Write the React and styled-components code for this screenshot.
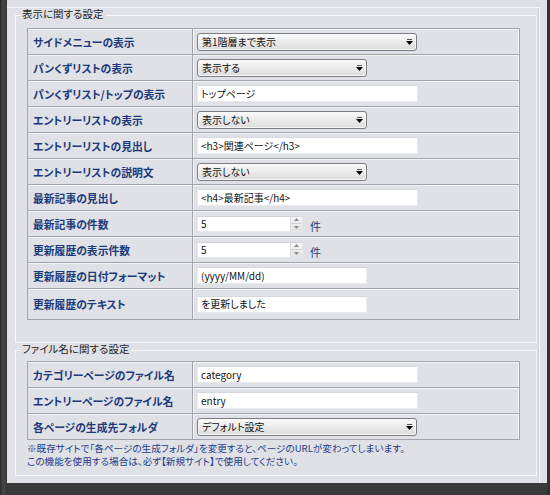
import React from 'react';
import styled, { createGlobalStyle } from 'styled-components';

const Global = createGlobalStyle`
  html, body { margin: 0; padding: 0; background: #363636; }
  body {
    width: 550px; height: 495px; overflow: hidden;
    font-family: "Noto Sans CJK JP", "Noto Sans", sans-serif;
  }
`;

const Screen = styled.div`
  width: 550px;
  height: 495px;
  box-sizing: border-box;
  padding: 0 3px 12px 7px;
  background: linear-gradient(90deg, #2b2b2b 0, #474747 3px, #3a3a3a 7px, #3a3a3a 546px, #2c2c2c 550px);
  display: flex;
`;

const Panel = styled.div`
  flex: 1;
  background: #dfe1e6;
  display: flex;
  flex-direction: column;
`;

const TopStrip = styled.div`
  height: 7px;
  flex: none;
  margin-right: 7px;
  background: #dcdee3;
`;

const Content = styled.div`
  flex: 1;
  margin-right: 7px;
  border-top: 1px solid #f6f7f9;
  border-right: 1px solid #f6f7f9;
  box-shadow: inset -1px 0 0 #d0d3d9;
  padding-left: 8px;
  display: flex;
  flex-direction: column;
`;

const Fieldset = styled.fieldset`
  margin: 0 2px 0 0;
  padding: ${p => p.$pad};
  border: 1px solid #f7f8fa;
  box-shadow: 1px 0 0 #d3d6dc;
  min-width: 0;
`;

const Legend = styled.legend`
  margin-left: -7px;
  padding: 0 2px 2px;
  font-size: 10.5px;
  line-height: 12px;
  color: #1e1e1e;
  font-feature-settings: "palt";
`;

const Table = styled.div`
  width: 493px;
  box-sizing: border-box;
  border: 1px solid #a2a4a9;
  border-bottom: none;
  box-shadow: inset -1px 0 0 #f5f6f8;
`;

const Row = styled.div`
  display: grid;
  grid-template-columns: 165px 1fr;
  height: ${p => (p.$tall ? 31 : 26)}px;
  box-sizing: border-box;
  border-bottom: 1px solid #a2a4a9;
  box-shadow: inset 0 1px 0 #f3f4f6;
`;

const Label = styled.div`
  display: flex;
  align-items: center;
  padding-left: 5px;
  border-right: 1px solid #a2a4a9;
  font-size: 10.8px;
  font-weight: 700;
  color: #1c3a7a;
  font-feature-settings: "palt";
  white-space: nowrap;
`;

const Value = styled.div`
  display: flex;
  align-items: center;
  padding-left: 4px;
  box-shadow: inset 1px 0 0 #f3f4f6;
`;

const SelectBox = styled.div`
  width: ${p => p.$w}px;
  height: 18px;
  box-sizing: border-box;
  border: 1px solid #7c7e83;
  border-radius: 3px;
  background: linear-gradient(#fbfbfb 0%, #ececec 45%, #dcdcdc 100%);
  box-shadow: inset 0 0 0 1px #f7f7f7;
  display: flex;
  align-items: center;
  justify-content: space-between;
  padding: 0 3px 0 4px;
`;

const ControlText = styled.span`
  font-size: 10px;
  line-height: 12px;
  color: #111;
  font-feature-settings: "palt";
  white-space: nowrap;
`;

const TextBox = styled.div`
  width: ${p => p.$w}px;
  height: 17px;
  box-sizing: border-box;
  background: #fff;
  border: 1px solid #e9eaed;
  border-top-color: #d6d8dc;
  display: flex;
  align-items: center;
  padding-left: 3px;
`;

const SpinWrap = styled.div`
  display: flex;
  align-items: center;
`;

const SpinBox = styled.div`
  width: 106px;
  height: 16px;
  box-sizing: border-box;
  background: #fff;
  border: 1px solid #e6e7ea;
  border-top-color: #d2d4d8;
  display: flex;
  align-items: stretch;
  padding-left: 3px;
`;

const SpinText = styled.div`
  flex: 1;
  display: flex;
  align-items: center;
`;

const SpinButtons = styled.div`
  width: 11px;
  display: flex;
  flex-direction: column;
  border-left: 1px solid #d8d9dc;
  background: linear-gradient(#f6f6f6, #e2e2e2);
`;

const SpinHalf = styled.div`
  flex: 1;
  display: flex;
  align-items: center;
  justify-content: center;
  border-bottom: ${p => (p.$top ? '1px solid #cfd0d3' : 'none')};
`;

const Unit = styled.span`
  margin-left: 7px;
  margin-top: 5px;
  font-size: 11px;
  color: #1c3a7a;
`;

const Note = styled.div`
  margin-top: 2px;
  font-size: 9.6px;
  color: #1f3c86;
  font-feature-settings: "palt";
  white-space: nowrap;
`;

const NoteLine = styled.div`
  height: 13px;
  line-height: 13px;
`;

const Arrow = () => (
  <svg width="7" height="6" viewBox="0 0 7 6">
    <rect x="1" y="0" width="5" height="1" fill="#555" />
    <polygon points="0,2 7,2 3.5,6" fill="#000" />
  </svg>
);

const SpinArrow = ({ up }) => (
  <svg width="5" height="3" viewBox="0 0 5 3">
    <polygon points={up ? '0,3 5,3 2.5,0' : '0,0 5,0 2.5,3'} fill="#8a8a8a" />
  </svg>
);

const Select = ({ w, children }) => (
  <SelectBox $w={w}>
    <ControlText>{children}</ControlText>
    <Arrow />
  </SelectBox>
);

const Text = ({ w, children }) => (
  <TextBox $w={w}>
    <ControlText>{children}</ControlText>
  </TextBox>
);

const Spinner = ({ value }) => (
  <SpinWrap>
    <SpinBox>
      <SpinText>
        <ControlText>{value}</ControlText>
      </SpinText>
      <SpinButtons>
        <SpinHalf $top><SpinArrow up /></SpinHalf>
        <SpinHalf><SpinArrow /></SpinHalf>
      </SpinButtons>
    </SpinBox>
    <Unit>件</Unit>
  </SpinWrap>
);

const displayRows = [
  ['サイドメニューの表示', <Select w={220}>第1階層まで表示</Select>],
  ['パンくずリストの表示', <Select w={170}>表示する</Select>],
  ['パンくずリスト/トップの表示', <Text w={221}>トップページ</Text>],
  ['エントリーリストの表示', <Select w={170}>表示しない</Select>],
  ['エントリーリストの見出し', <Text w={221}>{'<h3>関連ページ</h3>'}</Text>],
  ['エントリーリストの説明文', <Select w={170}>表示しない</Select>],
  ['最新記事の見出し', <Text w={221}>{'<h4>最新記事</h4>'}</Text>],
  ['最新記事の件数', <Spinner value="5" />],
  ['更新履歴の表示件数', <Spinner value="5" />],
  ['更新履歴の日付フォーマット', <Text w={170}>(yyyy/MM/dd)</Text>],
  ['更新履歴のテキスト', <Text w={170}>を更新しました</Text>, true],
];

const fileRows = [
  ['カテゴリーページのファイル名', <Text w={221}>category</Text>],
  ['エントリーページのファイル名', <Text w={221}>entry</Text>],
  ['各ページの生成先フォルダ', <Select w={220}>デフォルト設定</Select>],
];

const SettingsTable = ({ rows }) => (
  <Table>
    {rows.map(([label, control, tall]) => (
      <Row key={label} $tall={tall}>
        <Label>{label}</Label>
        <Value>{control}</Value>
      </Row>
    ))}
  </Table>
);

export default function App() {
  return (
    <>
      <Global />
      <Screen>
        <Panel>
          <TopStrip />
          <Content>
            <Fieldset $pad="6px 14px 22px 11px">
              <Legend>表示に関する設定</Legend>
              <SettingsTable rows={displayRows} />
            </Fieldset>
            <Fieldset $pad="4px 14px 7px 11px">
              <Legend>ファイル名に関する設定</Legend>
              <SettingsTable rows={fileRows} />
              <Note>
                <NoteLine>※既存サイトで「各ページの生成フォルダ」を変更すると、ページのURLが変わってしまいます。</NoteLine>
                <NoteLine>この機能を使用する場合は、必ず【新規サイト】で使用してください。</NoteLine>
              </Note>
            </Fieldset>
          </Content>
        </Panel>
      </Screen>
    </>
  );
}
